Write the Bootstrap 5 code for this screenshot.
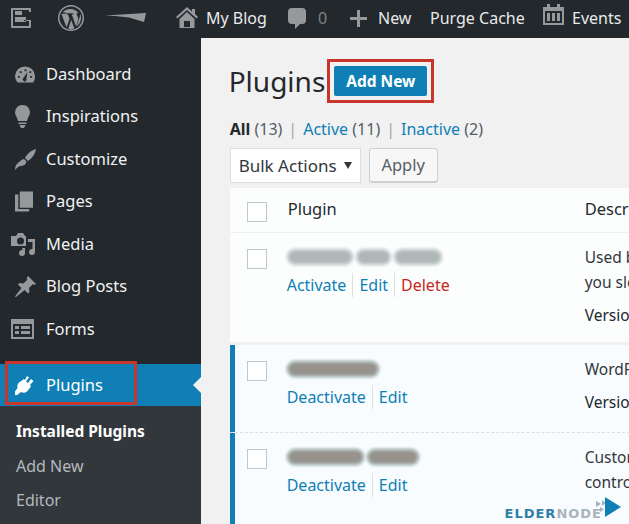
<!DOCTYPE html>
<html lang="en">
<head>
  <meta charset="UTF-8" />
  <title>Plugins</title>
  <link href="https://cdn.jsdelivr.net/npm/bootstrap@5.3.3/dist/css/bootstrap.min.css" rel="stylesheet">
  <style>
    html, body { height: 100%; }
    body {
      width: 629px;
      height: 524px;
      overflow: hidden;
      background: #f1f1f1;
      color: #23282d;
      font-family: "Noto Sans", sans-serif;
      font-size: 16.5px;
    }
    a { text-decoration: none; color: #0f7fb5; }
    svg { display: block; fill: #96999c; flex: none; }

    .topbar { height: 38px; background: #23282d; color: #e8eaeb; font-size: 16px; white-space: nowrap; }
    .topbar-item { height: 36px; }
    .comment-count { color: #7d8286; }
    .calendar-icon { margin-bottom: 7px; }

    .page-body { height: 486px; }
    .sidebar { width: 201px; background: #23282d; }
    .side-list { padding-top: 15px; }
    .side-item { height: 42.5px; color: #f0f2f3; padding-left: 11px; gap: 10px; }
    .side-icon { width: 25px; }
    .side-item.is-current { height: 42px; margin-top: 13.5px; background: #0f7fb5; color: #fff; position: relative; }
    .side-item.is-current svg { fill: #fff; }
    .side-item.is-current::after {
      content: "";
      position: absolute;
      right: 0;
      top: 13px;
      border: 8px solid transparent;
      border-right-color: #f1f1f1;
      border-left: 0;
    }
    .red-frame { position: absolute; border: 3px solid #c8352a; }
    .frame-side { left: 5px; top: -3px; width: 132px; height: 44px; }
    .frame-btn { left: -7px; top: -7px; width: 107px; height: 44px; }
    .sub-menu { background: #32373c; padding-top: 9px; flex: 1; }
    .sub-item { height: 34px; padding-left: 16px; color: #b4b9be; font-size: 16px; }
    .sub-item.is-active { color: #fff; font-weight: 700; font-size: 15.5px; }

    .main-area { min-width: 0; padding-left: 29px; position: relative; overflow: hidden; }
    .page-title { height: 30px; margin-top: 28px; gap: 9px; }
    .page-title h1 { font-size: 28px; font-weight: 400; margin: 0 0 0 -1px; line-height: 1; color: #23282d; }
    .add-btn-wrap { position: relative; }
    .add-btn {
      display: block;
      background: #0f7fb5;
      color: #fff;
      font-size: 15.5px;
      font-weight: 700;
      width: 93px;
      height: 30px;
      line-height: 30px;
      text-align: center;
      border-radius: 2px;
    }
    .filter-links { margin-top: 22px; font-size: 16px; height: 22px; color: #555d66; gap: 6px; white-space: nowrap; }
    .filter-links b { color: #23282d; }
    .sep { color: #a0a5aa; }
    .bulk-row { margin-top: 8px; height: 35px; gap: 8px; }
    .bulk-select {
      width: 131px;
      height: 35px;
      background: #fff;
      border: 1px solid #ddd;
      font-size: 17px;
      padding: 0 8px;
      color: #32373c;
    }
    .bulk-caret { width: 0; height: 0; border: 4px solid transparent; border-top: 7px solid #32373c; border-bottom: 0; }
    .apply-btn {
      width: 69px;
      height: 35px;
      background: #f7f7f7;
      border: 1px solid #ccd0d4;
      border-bottom-width: 2px;
      border-radius: 3px;
      font-size: 16.5px;
      color: #555d66;
      padding: 0;
    }
    .plugin-table { margin-top: 5px; width: 400px; background: #fcfefe; font-size: 15.5px; }
    .plugin-row { display: grid; grid-template-columns: 58px 297px 1fr; white-space: nowrap; overflow: hidden; }
    .head-row { height: 45px; align-items: center; border-bottom: 1px solid #eef0f1; font-size: 16.5px; padding-bottom: 1px; }
    .head-row .tick { margin-top: 4px; }
    .row-first { height: 112px; border-bottom: 3px solid #f1f1f1; padding-top: 16px; }
    .row-on { background: #f8fcfe; box-shadow: inset 5px 0 0 #0f7fb5; padding-top: 16px; }
    .row-second { height: 88px; border-bottom: 1px dashed #dcdfe1; }
    .row-third { height: 92px; }
    .tick { width: 20px; height: 20px; background: #fff; border: 1px solid #bcc8cc; margin-left: 17px; }
    .smudge-line { height: 12px; margin: 2px 0 10px 1px; gap: 7px; }
    .smudge { display: block; height: 12px; border-radius: 6px; filter: blur(1px); }
    .smudge-light { background: #b0b8b7; box-shadow: 0 0 0 3px #d3dada; }
    .smudge-dark { background: #97928c; box-shadow: 0 0 0 3px #b6c3c3; }
    .row-links { font-size: 16px; gap: 6px; margin-left: -1px; }
    .row-sep { width: 1px; background: #dde0e2; }
    .link-red { color: #c4281c; }
    .desc-text { line-height: 25px; color: #32373c; margin-top: -4px; }
    .desc-version { line-height: 25px; margin-top: 8px; color: #23282d; }
    .logo-mark { position: absolute; right: 8px; bottom: 5px; }
    .logo-text { font-family: "DejaVu Sans", sans-serif; font-weight: 700; font-size: 13px; letter-spacing: 1px; color: #2f7ea8; line-height: 1; margin-bottom: -1px; }
    .logo-text span { color: #a9b4ba; }
    .logo-mark svg { margin-left: -6px; margin-bottom: 2px; }
    .logo-big { fill: #0f7fb5; }
    .logo-small { fill: #9fb4c0; }
  </style>
</head>
<body>

  <div class="topbar d-flex align-items-start">
    <div class="topbar-item d-flex align-items-center" style="width:58px;padding-left:11px">
      <svg width="20" height="20" viewBox="0 0 20 20"><path fill-rule="evenodd" d="M1 0h18a1 1 0 0 1 1 1v3h-2V2H2v16h16v-5h-5v-1h7v7a1 1 0 0 1-1 1H1a1 1 0 0 1-1-1V1a1 1 0 0 1 1-1zM4 3h7v4H4zM4 9h11v5H4z"/></svg>
    </div>
    <div class="topbar-item d-flex align-items-center" style="width:47px">
      <svg width="26" height="26" viewBox="0 0 26 26"><path fill-rule="evenodd" d="M13 0a13 13 0 1 0 0 26 13 13 0 0 0 0-26zm0 1.500a11.500 11.500 0 1 1 0 23 11.500 11.500 0 0 1 0-23zM3.500 9l5 13.500 3-8.500-1.500-4.500-1.500-.2v-1h7v1l-1.700.2 4.200 12 2-6.500c.6-2.500-.5-3.600-1.200-5-.5-1 .3-2.200 1.500-2.200A10.300 10.300 0 0 0 4.600 7.500l3.500-.1v1.100zM13.200 15l-3 8.800a10.500 10.500 0 0 0 6.200-.2zM22 8.500c.3 2.500-.5 4.300-3.500 13a10.500 10.500 0 0 0 3.500-13z"/></svg>
    </div>
    <div class="topbar-item d-flex align-items-center" style="width:71px">
      <svg width="41" height="10" viewBox="0 0 41 10"><path d="M0 2.500l41-2.500-2 9-15-4.500-14-1.500z"/></svg>
    </div>
    <div class="topbar-item d-flex align-items-center gap-2" style="width:112px">
      <svg width="22" height="22" viewBox="0 0 22 22"><path fill-rule="evenodd" d="M11 0l5 4.500V2h3v5l3 3-1.500 1.500L11 3 1.500 11.500 0 10zM3.500 12L11 5l7.500 7v9h-15zM8 14v6h6v-6z"/></svg>
      <span>My Blog</span>
    </div>
    <div class="topbar-item d-flex align-items-center" style="width:62px;gap:12px">
      <svg width="18" height="21" viewBox="0 0 18 21"><path d="M4 0h10a4 4 0 0 1 4 4v8a4 4 0 0 1-4 4h-2l-5 5v-5H4a4 4 0 0 1-4-4V4a4 4 0 0 1 4-4z"/></svg>
      <span class="comment-count">0</span>
    </div>
    <div class="topbar-item d-flex align-items-center" style="width:80px;gap:11px">
      <svg width="17" height="17" viewBox="0 0 17 17"><path d="M7 0h3v7h7v3h-7v7H7v-7H0V7h7z"/></svg>
      <span>New</span>
    </div>
    <div class="topbar-item d-flex align-items-center" style="width:113px">Purge Cache</div>
    <div class="topbar-item d-flex align-items-center gap-2">
      <svg class="calendar-icon" width="21" height="21" viewBox="0 0 21 21"><path fill-rule="evenodd" d="M0 3h4V0h3v3h7V0h3v3h4v18H0zM2 7v12h17V7zM4 9h3v8H4zM9 9h3v8H9zM14 9h3v8h-3z"/></svg>
      <span>Events</span>
    </div>
  </div>

  <div class="page-body d-flex">
    <div class="sidebar d-flex flex-column">
      <div class="side-list">
        <div class="side-item d-flex align-items-center">
          <span class="side-icon"><svg class="ms-1" width="20" height="17" viewBox="0 0 21 17"><path fill-rule="evenodd" d="M10.500 0A10.500 10.500 0 0 1 21 10.500c0 2.500-.8 4.700-2 6.500H2.900A10.400 10.400 0 0 1 0 10.500 10.500 10.500 0 0 1 10.500 0zM10 3v2h2V3zM5 5v2h2V5zM15 5v2h2V5zM3 10v2h2v-2zM16 10v2h2v-2zM13 6l-4 6a2 2 0 1 0 3 1z"/></svg></span>
          <span>Dashboard</span>
        </div>
        <div class="side-item d-flex align-items-center">
          <span class="side-icon"><svg class="ms-1" width="15" height="23" viewBox="0 0 15 23"><path d="M7.500 0A7.300 7.300 0 0 1 15 7.300c0 3.200-2.500 5-3 8.700H3C2.500 12.300 0 10.500 0 7.300A7.300 7.300 0 0 1 7.500 0zM3.500 17.500h8v1.500h-8zM4.500 20h6l-1.500 3H6z"/></svg></span>
          <span>Inspirations</span>
        </div>
        <div class="side-item d-flex align-items-center">
          <span class="side-icon"><svg class="ms-1" width="21" height="21" viewBox="0 0 21 21"><path d="M21 0c-.5 4-3.500 9-8 12l-3-3c2.500-5 7-8 11-9zM9 10l2.500 2.500c-.5 3-3 4.500-6 4.500-1.500 0-3 1.500-5.500 4 0-3 1-6 3.500-7.500C5 12.500 6.500 10.500 9 10z"/></svg></span>
          <span>Customize</span>
        </div>
        <div class="side-item d-flex align-items-center">
          <span class="side-icon"><svg class="ms-1" width="18" height="21" viewBox="0 0 19 21"><path d="M5 0h14v17H5zM0 3h3.500v15.500H15V21H0z"/></svg></span>
          <span>Pages</span>
        </div>
        <div class="side-item d-flex align-items-center">
          <span class="side-icon"><svg width="24" height="23" viewBox="0 0 24 23"><path fill-rule="evenodd" d="M5 3l2-3h5l2 3h1v10H0V3zM9.500 4.500a3.500 3.500 0 1 0 0 7 3.500 3.500 0 0 0 0-7zM17 6h7v13a3 3 0 1 1-2.500-3V9H17zM11 15h3v5a3 3 0 1 1-2.500-3z"/></svg></span>
          <span>Media</span>
        </div>
        <div class="side-item d-flex align-items-center">
          <span class="side-icon"><svg class="ms-1" width="21" height="21" viewBox="0 0 21 21"><path d="M13 0l8 8-2 1-1-1-4 4 .5 4-1.500 1.500-3.500-3.500L1 21l-1-.5 6.500-8.500L3 8.500 4.500 7l4 .5 4-4-1-1z"/></svg></span>
          <span>Blog Posts</span>
        </div>
        <div class="side-item d-flex align-items-center">
          <span class="side-icon"><svg width="23" height="20" viewBox="0 0 23 20"><path fill-rule="evenodd" d="M0 0h23v20H0zM2 5v13h19V5zM4 7h4v3H4zM10 7h9v3h-9zM4 12h4v3H4zM10 12h9v3h-9z"/></svg></span>
          <span>Forms</span>
        </div>
      </div>
      <div class="side-item is-current d-flex align-items-center">
        <span class="side-icon"><svg class="ms-1" width="19" height="19" viewBox="0 0 19 19"><path d="M12 0l2 1.500-3 4 2 1.500 3-4 2.500 2-3.500 4 1 1.500-4 5c-2 1.500-4 1.500-6 .5L2 19H0v-3.500L2.500 12c-.5-2 0-4 1.500-5.500L9 3l1 1z"/></svg></span>
        <span>Plugins</span>
        <span class="red-frame frame-side"></span>
      </div>
      <div class="sub-menu">
        <div class="sub-item is-active d-flex align-items-center">Installed Plugins</div>
        <div class="sub-item d-flex align-items-center">Add New</div>
        <div class="sub-item d-flex align-items-center">Editor</div>
      </div>
    </div>

    <div class="main-area flex-grow-1">
      <div class="page-title d-flex align-items-center">
        <h1>Plugins</h1>
        <div class="add-btn-wrap">
          <a href="#" class="add-btn">Add New</a>
          <span class="red-frame frame-btn"></span>
        </div>
      </div>
      <div class="filter-links d-flex align-items-center">
        <span><b>All</b> (13)</span><span class="sep">|</span>
        <span><a href="#">Active</a> (11)</span><span class="sep">|</span>
        <span><a href="#">Inactive</a> (2)</span>
      </div>
      <div class="bulk-row d-flex">
        <div class="bulk-select d-flex align-items-center justify-content-between">
          <span>Bulk Actions</span><span class="bulk-caret"></span>
        </div>
        <button class="apply-btn" type="button">Apply</button>
      </div>
      <div class="plugin-table">
        <div class="plugin-row head-row">
          <div class="tick"></div>
          <div>Plugin</div>
          <div>Description</div>
        </div>
        <div class="plugin-row row-first">
          <div class="tick"></div>
          <div>
            <div class="smudge-line d-flex">
              <span class="smudge smudge-light" style="width:62px"></span>
              <span class="smudge smudge-light" style="width:31px"></span>
              <span class="smudge smudge-light" style="width:44px"></span>
            </div>
            <div class="row-links d-flex">
              <a href="#">Activate</a><span class="row-sep"></span><a href="#">Edit</a><span class="row-sep"></span><a href="#" class="link-red">Delete</a>
            </div>
          </div>
          <div>
            <div class="desc-text">Used by millions<br>you sleep</div>
            <div class="desc-version">Version</div>
          </div>
        </div>
        <div class="plugin-row row-on row-second">
          <div class="tick"></div>
          <div>
            <div class="smudge-line d-flex">
              <span class="smudge smudge-dark" style="width:88px"></span>
            </div>
            <div class="row-links d-flex">
              <a href="#">Deactivate</a><span class="row-sep"></span><a href="#">Edit</a>
            </div>
          </div>
          <div>
            <div class="desc-text">WordPress</div>
            <div class="desc-version">Version</div>
          </div>
        </div>
        <div class="plugin-row row-on row-third">
          <div class="tick"></div>
          <div>
            <div class="smudge-line d-flex">
              <span class="smudge smudge-dark" style="width:73px"></span>
              <span class="smudge smudge-dark" style="width:48px"></span>
            </div>
            <div class="row-links d-flex">
              <a href="#">Deactivate</a><span class="row-sep"></span><a href="#">Edit</a>
            </div>
          </div>
          <div>
            <div class="desc-text">Customize<br>control</div>
          </div>
        </div>
      </div>
      <div class="logo-mark d-flex align-items-end">
        <div class="logo-text">ELDER<span>NODE</span></div>
        <svg width="25" height="20" viewBox="0 0 25 20">
          <path class="logo-small" d="M0 4l5 3-5 3zM4 10l4 2.500-4 2.500zM6 3l4 3-4 3z"/>
          <path class="logo-big" d="M9 0l16 10-16 10z"/>
        </svg>
      </div>
    </div>
  </div>

</body>
</html>
